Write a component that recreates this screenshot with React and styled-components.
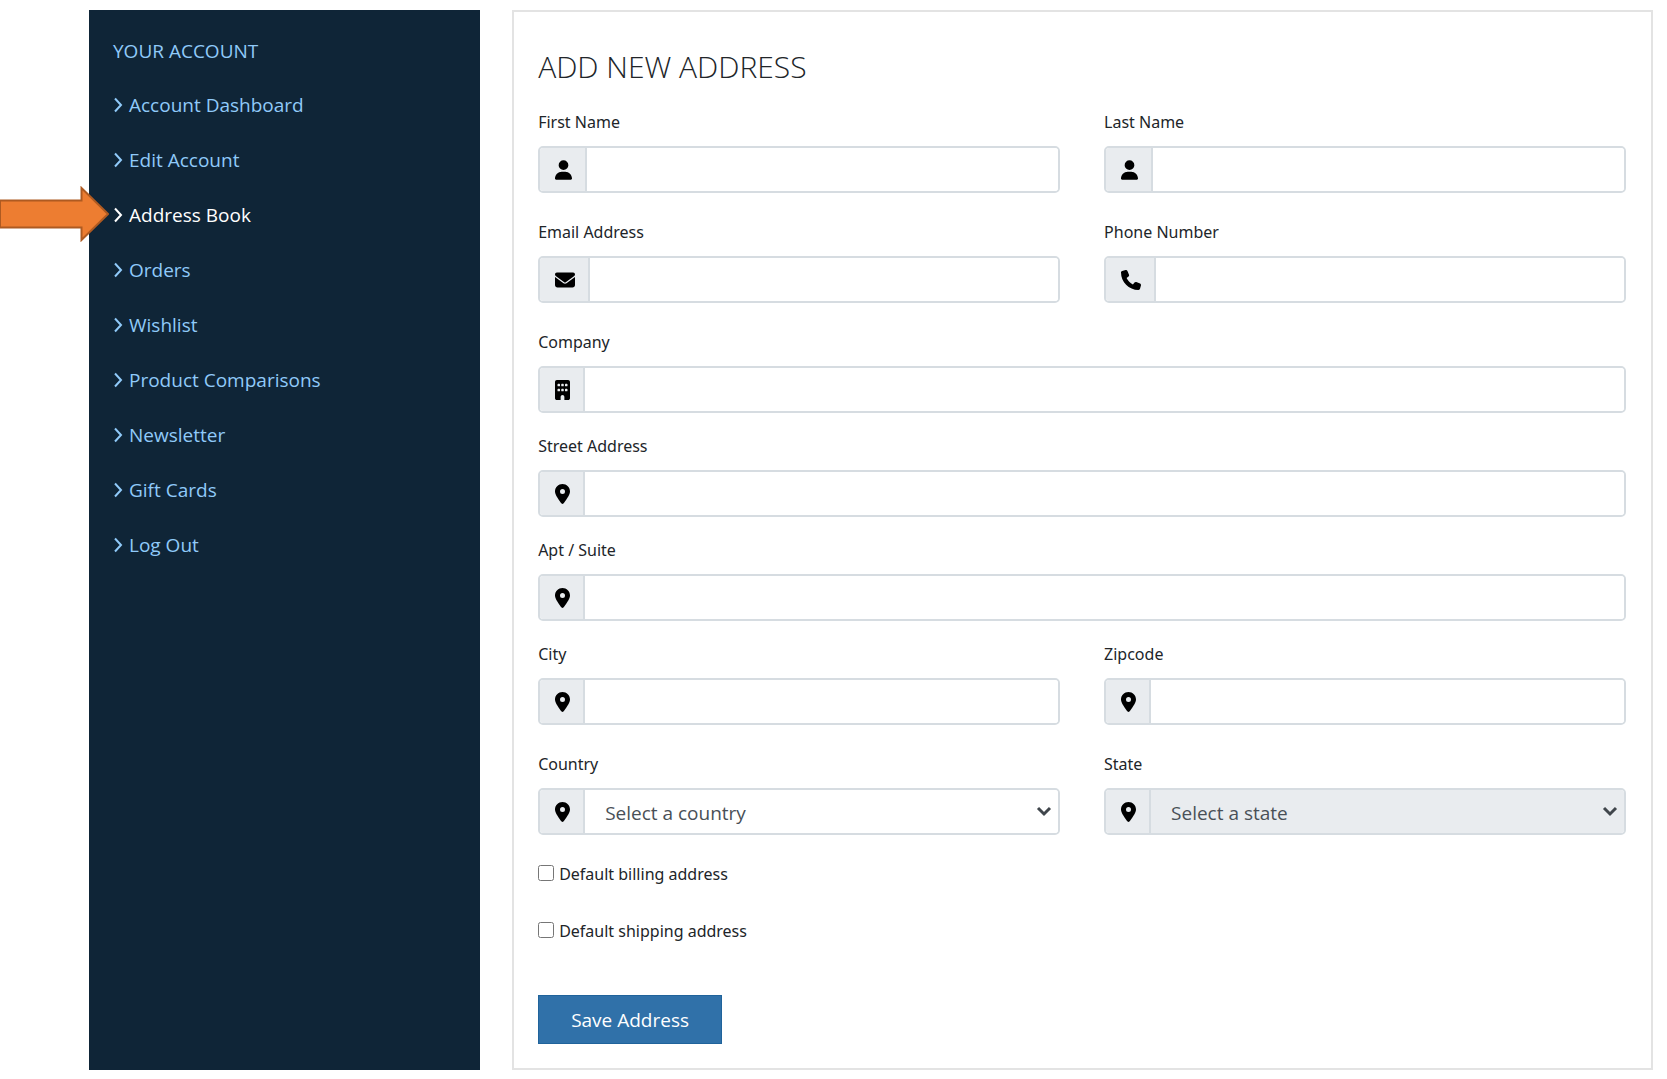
import React from 'react'
import styled, { createGlobalStyle, css } from 'styled-components'
import { FaUser, FaEnvelope, FaPhone, FaBuilding, FaLocationDot } from 'react-icons/fa6'

const GlobalStyle = createGlobalStyle`
  * {
    box-sizing: border-box;
  }
  body {
    margin: 0;
    background: #fff;
    color: #212529;
    font-family: "Open Sans", "Noto Sans", sans-serif;
    font-size: 16px;
    line-height: 24px;
  }
`
const Page = styled.div`
  display: grid;
  grid-template-columns: minmax(240px, 12fr) 35fr;
  gap: 32px;
  padding: 10px 14px 9px 89px;
`
const Sidebar = styled.nav`
  padding: 29px 24px;
  background: #0f2537;
  color: #90caf9;
  font-size: 19px;
`
const SidebarTitle = styled.h2`
  margin: 0 0 30px;
  font-size: 19px;
  font-weight: 400;
  text-transform: uppercase;
`
const Menu = styled.ul`
  display: flex;
  flex-direction: column;
  gap: 31px;
  margin: 0;
  padding: 0;
  list-style: none;
`
const MenuItem = styled.li`
  position: relative;
`
const MenuLink = styled.a`
  display: flex;
  align-items: center;
  gap: 6px;
  padding-top: 1px;
  line-height: 23px;
  color: ${props => props.$active ? '#fff' : '#90caf9'};
  text-decoration: none;
`
const Chevron = styled.svg`
  width: 10px;
  height: 16px;
  margin-bottom: 2px;
  fill: none;
  stroke: currentColor;
  stroke-width: 2;
`
const Pointer = styled.svg`
  position: absolute;
  right: calc(100% + 4px);
  top: 50%;
  width: 110px;
  height: 56px;
  margin-top: -29px;
  fill: #ed7d31;
  stroke: #ae5a21;
  stroke-width: 2;
`
const Card = styled.main`
  padding: 38px 25px 24px 24px;
  border: 2px solid #e3e3e3;
`
const Title = styled.h1`
  margin: 0 0 26px;
  font-size: 30px;
  font-weight: 300;
  line-height: 34px;
  text-transform: uppercase;
`
const Form = styled.form`
  display: flex;
  flex-direction: column;
`
const Row = styled.div`
  display: grid;
  grid-template-columns: ${props => props.$wide ? '1fr' : '1fr 1fr'};
  column-gap: 44px;
  margin-bottom: ${props => props.$wide ? '21px' : '27px'};
`
const Label = styled.label`
  display: block;
  margin-bottom: 12px;
  font-family: "Noto Sans", sans-serif;
`
const Group = styled.div`
  display: flex;
  height: 47px;
  overflow: hidden;
  border: 2px solid #d6dce1;
  border-radius: 5px;
`
const Addon = styled.span`
  display: flex;
  flex: none;
  align-items: center;
  padding: 0 13px 0 15px;
  border-right: 2px solid #d6dce1;
  background: #e9ecef;
  color: #000;

  svg {
    width: ${props => props.$iconWidth}px;
    height: 20px;
  }
`
const control = css`
  flex: 1;
  min-width: 0;
  border: 0;
  outline: 0;
  background: #fff;
  color: #495057;
  font-family: inherit;
  font-size: 19px;
`
const Input = styled.input`
  ${control}
  padding: 0 15px;
`
const SelectBox = styled.div`
  position: relative;
  display: flex;
  flex: 1;
`
const Select = styled.select`
  ${control}
  appearance: none;
  padding: 2px 40px 0 20px;

  &:disabled {
    background: #e9ecef;
    opacity: 1;
  }
`
const Arrow = styled.svg`
  position: absolute;
  right: 6px;
  top: 16px;
  width: 16px;
  height: 11px;
  fill: none;
  stroke: #40464c;
  stroke-width: 3;
  pointer-events: none;
`
const Check = styled.label`
  display: flex;
  align-items: center;
  align-self: flex-start;
  gap: 5px;
  margin-bottom: 33px;
  font-family: "Noto Sans", sans-serif;
`
const Checkbox = styled.input`
  width: 16px;
  height: 16px;
  margin: 0 0 2px;
`
const Save = styled.button`
  align-self: flex-start;
  height: 49px;
  margin-top: 19px;
  padding: 0 32px;
  border: 1px solid #20639b;
  background: #3071a9;
  color: #fff;
  font-family: inherit;
  font-size: 19px;
`

const links = [
  'Account Dashboard',
  'Edit Account',
  'Address Book',
  'Orders',
  'Wishlist',
  'Product Comparisons',
  'Newsletter',
  'Gift Cards',
  'Log Out',
]

const Field = ({ id, label, icon: Icon, iconWidth = 15, type = 'text', placeholder, disabled }) => {
  return (
    <div>
      <Label htmlFor={id}>{label}</Label>
      <Group>
        <Addon $iconWidth={iconWidth}><Icon/></Addon>
        {type === 'select' ? (
          <SelectBox>
            <Select id={id} disabled={disabled}>
              <option>{placeholder}</option>
            </Select>
            <Arrow viewBox="0 0 16 11"><path d="M2 2l6 6 6-6"/></Arrow>
          </SelectBox>
        ) : (
          <Input id={id} type={type}/>
        )}
      </Group>
    </div>
  )
}

const App = () => {
  return (
    <>
      <GlobalStyle/>
      <Page>
        <Sidebar>
          <SidebarTitle>Your Account</SidebarTitle>
          <Menu>
            {links.map(link => {
              const active = link === 'Address Book'
              return (
                <MenuItem key={link}>
                  <MenuLink href="#" $active={active}>
                    <Chevron viewBox="0 0 10 16"><path d="M2 1.5l6 6.5-6 6.5"/></Chevron>
                    {link}
                  </MenuLink>
                  {active && (
                    <Pointer viewBox="0 0 110 56">
                      <path d="M1 14.500H82.500V2L109 28 82.500 54V41.500H1z"/>
                    </Pointer>
                  )}
                </MenuItem>
              )
            })}
          </Menu>
        </Sidebar>
        <Card>
          <Title>Add New Address</Title>
          <Form>
            <Row>
              <Field id="first-name" label="First Name" icon={FaUser} iconWidth={17}/>
              <Field id="last-name" label="Last Name" icon={FaUser} iconWidth={17}/>
            </Row>
            <Row>
              <Field id="email" label="Email Address" icon={FaEnvelope} iconWidth={20} type="email"/>
              <Field id="phone" label="Phone Number" icon={FaPhone} iconWidth={20} type="tel"/>
            </Row>
            <Row $wide>
              <Field id="company" label="Company" icon={FaBuilding}/>
            </Row>
            <Row $wide>
              <Field id="street" label="Street Address" icon={FaLocationDot}/>
            </Row>
            <Row $wide>
              <Field id="apt" label="Apt / Suite" icon={FaLocationDot}/>
            </Row>
            <Row>
              <Field id="city" label="City" icon={FaLocationDot}/>
              <Field id="zipcode" label="Zipcode" icon={FaLocationDot}/>
            </Row>
            <Row>
              <Field id="country" label="Country" icon={FaLocationDot} type="select" placeholder="Select a country"/>
              <Field id="state" label="State" icon={FaLocationDot} type="select" placeholder="Select a state" disabled/>
            </Row>
            <Check><Checkbox type="checkbox"/>Default billing address</Check>
            <Check><Checkbox type="checkbox"/>Default shipping address</Check>
            <Save type="button">Save Address</Save>
          </Form>
        </Card>
      </Page>
    </>
  )
}
export default App
